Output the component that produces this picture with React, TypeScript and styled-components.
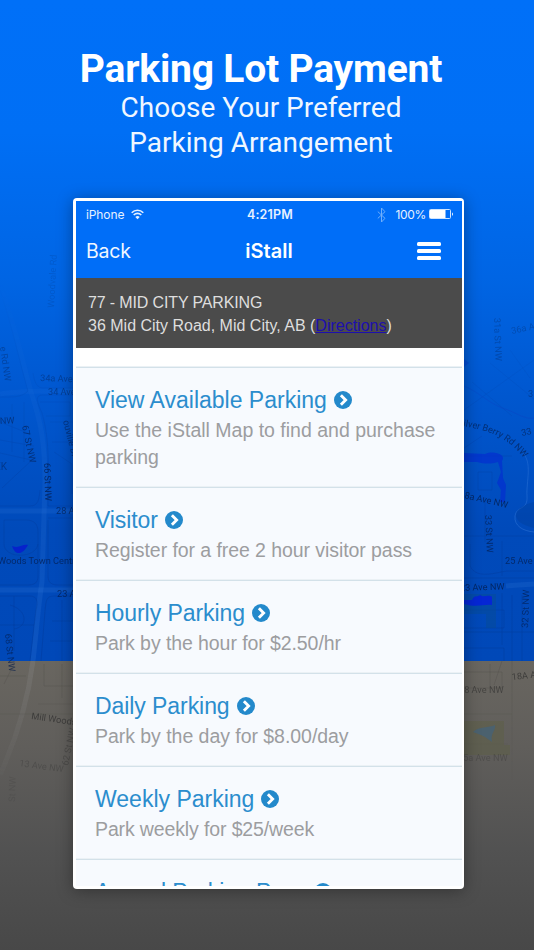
import React from "react";
import styled, { createGlobalStyle } from "styled-components";

const GlobalStyle = createGlobalStyle`
  * { box-sizing: border-box; }
  html, body { margin: 0; padding: 0; }
  body { width: 534px; height: 950px; overflow: hidden; }
`;

const helvetica = `"Liberation Sans", Arial, sans-serif`;

const Page = styled.main`
  position: relative;
  width: 534px;
  height: 950px;
  overflow: hidden;
  display: flex;
  flex-direction: column;
  align-items: center;
  background: #4a4a4a;
`;

const MapBackdrop = styled.svg`
  position: absolute;
  inset: 0;
  width: 534px;
  height: 950px;
`;

const Hero = styled.header`
  position: relative;
  width: 100%;
  height: 198px;
  padding-top: 48px;
  padding-right: 12px;
  text-align: center;
  color: #fff;
  font-family: Roboto, sans-serif;
`;

const HeroTitle = styled.h1`
  margin: 0;
  font-size: 39px;
  line-height: 43px;
  font-weight: 700;
  letter-spacing: -0.2px;
`;

const HeroLine = styled.p`
  margin: 0;
  font-size: 28px;
  line-height: 34.5px;
  font-weight: 400;
  color: #f0f7ff;
`;

const Phone = styled.section`
  position: relative;
  width: 391px;
  height: 691px;
  margin-left: 3px;
  padding: 3px;
  border-radius: 4px;
  background: #fff;
  box-shadow: 0 2px 16px rgba(0, 0, 0, 0.35);
`;

const Screen = styled.div`
  width: 386px;
  height: 685px;
  overflow: hidden;
  display: flex;
  flex-direction: column;
  font-family: ${helvetica};
`;

const StatusBar = styled.div`
  flex: none;
  height: 27px;
  padding: 0 8px 0 10px;
  display: grid;
  grid-template-columns: 1fr auto 1fr;
  align-items: center;
  background: #006ef8;
  color: #e6f1ff;
  font: 400 12px/27px Inter, sans-serif;
`;

const StatusGroup = styled.div<{ $end?: boolean }>`
  display: flex;
  align-items: center;
  justify-content: ${(p) => (p.$end ? "flex-end" : "flex-start")};
`;

const Carrier = styled.span`
  margin-right: 7px;
  letter-spacing: -0.1px;
`;

const Clock = styled.span`
  font-weight: 600;
  font-size: 12.5px;
  letter-spacing: 0.2px;
`;

const Charge = styled.span`
  margin: 0 3px 0 9px;
  letter-spacing: -0.3px;
`;

const NavBar = styled.nav`
  flex: none;
  height: 50px;
  padding: 0 21px 5px 10px;
  display: grid;
  grid-template-columns: 1fr auto 1fr;
  align-items: center;
  background: #006ef8;
  color: #fff;
  font-family: Inter, sans-serif;
`;

const BackLink = styled.span`
  font-size: 19.5px;
  letter-spacing: -0.2px;
  color: #f0f7ff;
`;

const NavTitle = styled.span`
  font-size: 20px;
  font-weight: 600;
  margin-left: 11px;
`;

const MenuButton = styled.div`
  justify-self: end;
  width: 24px;
  display: flex;
  flex-direction: column;
  gap: 3px;
`;

const MenuBar = styled.i`
  height: 4px;
  border-radius: 1.5px;
  background: #fff;
`;

const Location = styled.div`
  flex: none;
  height: 70px;
  padding: 12.5px 12px 0;
  background: #4b4b4b;
  color: #dedede;
  font-size: 16px;
  line-height: 23.5px;
  white-space: nowrap;
`;

const LocationLine = styled.div<{ $spacing: string }>`
  letter-spacing: ${(p) => p.$spacing};
`;

const Directions = styled.a`
  color: #1d0fae;
  text-decoration: underline;
`;

const List = styled.div`
  margin-top: 19px;
  display: flex;
  flex-direction: column;
`;

const Option = styled.article`
  flex: none;
  padding: 18px 19px 16px;
  border-top: 1px solid #d3e1e9;
  background: #f7fafe;
  box-shadow: 0 -1px 0 #ebf1f5;
`;

const OptionTitle = styled.div`
  height: 28px;
  display: flex;
  align-items: center;
  gap: 7px;
  color: #2b8dcd;
  font-size: 23px;
  line-height: 28px;
  white-space: nowrap;
`;

const OptionLabel = styled.span<{ $spacing: string }>`
  letter-spacing: ${(p) => p.$spacing};
`;

const OptionText = styled.div<{ $spacing: string }>`
  margin-top: 3px;
  color: #9c9da0;
  font-size: 19.5px;
  line-height: 27px;
  letter-spacing: ${(p) => p.$spacing};
  white-space: pre-line;
`;

const options = [
  { title: "View Available Parking", text: "Use the iStall Map to find and purchase\nparking", ts: "0px", ds: "0px" },
  { title: "Visitor", text: "Register for a free 2 hour visitor pass", ts: "-0.1px", ds: "-0.07px" },
  { title: "Hourly Parking", text: "Park by the hour for $2.50/hr", ts: "-0.06px", ds: "-0.08px" },
  { title: "Daily Parking", text: "Park by the day for $8.00/day", ts: "-0.07px", ds: "-0.04px" },
  { title: "Weekly Parking", text: "Park weekly for $25/week", ts: "0px", ds: "-0.13px" },
  { title: "Annual Parking Pass", text: "Park all year", ts: "-0.1px", ds: "0px" },
];

const ChevronCircle = () => (
  <svg width="18" height="18" viewBox="0 0 18 18">
    <circle cx="9" cy="9" r="9" fill="#2389cb" />
    <path d="M6.9 4.3 11.6 9l-4.7 4.7" fill="none" stroke="#fff" strokeWidth="2.9" />
  </svg>
);

const Wifi = () => (
  <svg width="13" height="11" viewBox="0 0 13 11" fill="none" stroke="#e6f1ff" strokeWidth="1.6">
    <path d="M.7 3.8C4 .4 9 .4 12.3 3.8M2.7 6c2.2-2.2 5.4-2.2 7.6 0" />
    <path d="M4.3 7.9c1.3-1.2 3.1-1.2 4.4 0L6.5 10.2z" fill="#e6f1ff" stroke="none" />
  </svg>
);

const Bluetooth = () => (
  <svg width="9" height="16" viewBox="0 0 9 16" fill="none" stroke="#6eaefb" strokeWidth="1">
    <path d="M.8 4.6 8 11.3 4.5 15V1L8 4.7.8 11.4" />
  </svg>
);

const Battery = () => (
  <svg width="25" height="11" viewBox="0 0 25 11">
    <rect x=".5" y=".5" width="21" height="9" rx="1" fill="none" stroke="#cfe4ff" />
    <rect x="1" y="1" width="15.5" height="8" fill="#fff" />
    <path d="M23 3.4c1.3.3 1.3 3 0 3.4z" fill="#e6f1ff" />
  </svg>
);

const mapLabels: { t: string; x: number; y: number; r: number; o: number; s?: number }[] = [
  { t: "Woodvale Rd", x: 54, y: 308, r: -87, o: 0.15 },
  { t: "34a Ave NW", x: 40, y: 381, r: 2, o: 0.4 },
  { t: "34 Ave NW", x: 48, y: 395, r: 0, o: 0.45 },
  { t: "e Rd NW", x: 0, y: 347, r: 82, o: 0.35 },
  { t: "NW", x: 0, y: 424, r: -3, o: 0.55 },
  { t: "67 St NW", x: 22, y: 426, r: 78, o: 0.6 },
  { t: "EK", x: -5, y: 470, r: 0, o: 0.45, s: 10 },
  { t: "66 St NW", x: 44, y: 463, r: 88, o: 0.75 },
  { t: "ouville Dr W", x: 63, y: 421, r: 76, o: 0.55 },
  { t: "28 Ave NW", x: 56, y: 514, r: 0, o: 0.65 },
  { t: "Woods Town Centre", x: -2, y: 564, r: 0, o: 0.7 },
  { t: "23 Ave NW", x: 57, y: 597, r: 0, o: 0.7 },
  { t: "68 St NW", x: 5, y: 634, r: 84, o: 0.65 },
  { t: "Mill Woods Rd", x: 31, y: 719, r: 8, o: 0.65 },
  { t: "62 St NW", x: 68, y: 766, r: -78, o: 0.35 },
  { t: "13 Ave NW", x: 19, y: 766, r: 8, o: 0.28 },
  { t: "St NW", x: 15, y: 802, r: -88, o: 0.15 },
  { t: "31a St NW", x: 494, y: 318, r: 88, o: 0.3 },
  { t: "36a Ave", x: 512, y: 334, r: -12, o: 0.28 },
  { t: "35 Ave", x: 528, y: 397, r: 0, o: 0.4 },
  { t: "33 Ave", x: 522, y: 436, r: -12, o: 0.6 },
  { t: "8a Ave NW", x: 464, y: 498, r: 13, o: 0.75 },
  { t: "33 St NW", x: 485, y: 515, r: 87, o: 0.65 },
  { t: "25 Ave NW", x: 505, y: 564, r: 0, o: 0.7 },
  { t: "23 Ave NW", x: 460, y: 591, r: -2, o: 0.75 },
  { t: "32 St NW", x: 528, y: 628, r: -88, o: 0.65 },
  { t: "18A Ave", x: 512, y: 680, r: -6, o: 0.65 },
  { t: "18 Ave NW", x: 459, y: 693, r: 0, o: 0.55 },
  { t: "15a Ave NW", x: 458, y: 761, r: 0, o: 0.28 },
];

const StreetMap = () => (
  <MapBackdrop viewBox="0 0 534 950">
    <defs>
      <linearGradient id="sky" x1="0" y1="0" x2="0" y2="661" gradientUnits="userSpaceOnUse">
        <stop offset="0" stopColor="#0070f8" />
        <stop offset=".2" stopColor="#006ff5" />
        <stop offset=".42" stopColor="#0065e4" />
        <stop offset=".6" stopColor="#0057cf" />
        <stop offset=".8" stopColor="#004aba" />
        <stop offset="1" stopColor="#0048b8" />
      </linearGradient>
      <linearGradient id="ground" x1="0" y1="661" x2="0" y2="950" gradientUnits="userSpaceOnUse">
        <stop offset="0" stopColor="#696660" />
        <stop offset=".3" stopColor="#605e5b" />
        <stop offset=".65" stopColor="#525252" />
        <stop offset="1" stopColor="#484848" />
      </linearGradient>
      <linearGradient id="roadFade" x1="0" y1="280" x2="0" y2="800" gradientUnits="userSpaceOnUse">
        <stop offset="0" stopColor="#fff" stopOpacity="0" />
        <stop offset=".4" stopColor="#fff" stopOpacity=".7" />
        <stop offset=".72" stopColor="#fff" stopOpacity="1" />
        <stop offset="1" stopColor="#fff" stopOpacity="0" />
      </linearGradient>
      <mask id="fade" maskUnits="userSpaceOnUse" x="0" y="0" width="534" height="950">
        <rect width="534" height="950" fill="url(#roadFade)" />
      </mask>
      <path id="silverBerry" d="M463 426C490 431 510 436 531 468" />
    </defs>
    <rect width="534" height="661" fill="url(#sky)" />
    <rect y="661" width="534" height="289" fill="url(#ground)" />
    <g mask="url(#fade)" fill="none">
      <g stroke="#4a90ea" strokeOpacity=".17" strokeWidth="5">
        <path d="M0 285C14 322 22 360 31 392c10 30 14 52 14 90l-3 100C39 600 38 615 33 661" />
        <path d="M0 394c22-4 48-3 80-3M0 511h80M0 590h80M506 586l28-2" />
        <path d="M33 661C28 700 18 735 0 775" stroke="#8a8a8a" strokeOpacity=".3" />
      </g>
      <g stroke="#003083" strokeOpacity=".25" strokeWidth="1">
        <path d="M0 290C12 325 19 360 28 391c-7 7-16 6-28 6M80 388H42c-7-1-8-10-9-15M80 395H42c-8 1-4 9 0 18 8 29 6 50 6 93h32" />
        <path d="M0 422l30 12M0 440l34 6M0 453l36 8M12 404v48M24 402v60M2 488l30-28M0 506h30c8 0 9-6 10-16M4 520h22c8 0 12 4 12 12v44c0 7-4 9-10 9H0M4 520v24c0 15 32 15 34 0" />
        <path d="M48 518h32M48 520v56c0 7 4 9 10 9h22M0 596h30c8 0 8 7 6 14l-6 51M80 596H54c-8 0-8 5-9 15l-4 50" />
        <path d="M40 402h30v14H46M50 422h25v20H52M54 452l18 12v30M0 625h34M14 596v55M52 621h28M50 641h30M62 600v61M10 605c18 5 18 22 4 24" />
        <path d="M464 386c17 7 24 18 44 24 8 3 18 10 26 8" stroke="#1432bc" strokeOpacity=".5" />
        <path d="M464 410l70-50M472 382l40 34M490 363l44 36M510 350l20 28M464 456h48M464 448l18-12M478 472h14v18h-14zM485 497v45M464 536h70M470 544v22c7 15 30 5 38 5h26M502 541v35M464 578h70M502 593v52M464 610h40v18h-40M512 595v66M522 595v66M464 632h70M464 648h40v13" />
        <path d="M522 452c11 10 4 30 5 44 1 15-10 9-12 20-1 10 8 15 19 16" stroke="#5b9df0" strokeOpacity=".35" />
      </g>
      <g stroke="#4c4a47" strokeOpacity=".35" strokeWidth="1">
        <path d="M0 676h26M0 714h80M38 704h42M44 664v22h34M62 664v34M14 664l-10 20M464 672h38v16h-38M502 661l-8 24M512 661v119M464 714h48M464 744h44M490 664v22" />
      </g>
      <path d="M534 502c-22 5-26 20 0 26z" fill="#003b94" fillOpacity=".45" />
      <path d="M464 594h32v34h-10v-14h-22z" fill="#064b94" fillOpacity=".5" />
    </g>
    <path d="M464 453l21 1c9-4 22 1 17 7l1 17 3 7-1 17h-5l1-12-4-7 4-11-3-10c-8 2-12 2-21 0h-13z" fill="#0330cf" fillOpacity=".75" />
    <path d="M464 359l5 4-5 4z" fill="#0330cf" fillOpacity=".35" />
    <path d="M12 546c7 3 10-2 16-1-5 9-12 12-16 1z" fill="#0622cc" />
    <path d="M464 600h8c3-6 5-2 8-5 4 3 8-1 12 2v8c-9-1-15 3-28-1z" fill="#0526d4" />
    <path d="M464 721h40v24h6v10h-46z" fill="#5d5f43" fillOpacity=".45" />
    <path d="M473 732c6-6 16-4 22-7 1 6-5 8-3 17l-7-5-4-2z" fill="#486273" fillOpacity=".85" />
    <g fontFamily="Roboto, sans-serif" fill="#041b49">
      {mapLabels.map((l, i) => (
        <text
          key={i}
          fontSize={l.s ?? 9.2}
          fontWeight="400"
          opacity={l.o}
          fill={l.y > 661 ? "#292929" : undefined}
          transform={`translate(${l.x} ${l.y}) rotate(${l.r})`}
        >
          {l.t}
        </text>
      ))}
      <text fontSize="9.2" opacity=".65">
        <textPath href="#silverBerry">ilver Berry Rd NW</textPath>
      </text>
    </g>
  </MapBackdrop>
);

export default function App() {
  return (
    <>
      <GlobalStyle />
      <Page>
        <StreetMap />
        <Hero>
          <HeroTitle>Parking Lot Payment</HeroTitle>
          <HeroLine>Choose Your Preferred</HeroLine>
          <HeroLine>Parking Arrangement</HeroLine>
        </Hero>
        <Phone>
          <Screen>
            <StatusBar>
              <StatusGroup>
                <Carrier>iPhone</Carrier>
                <Wifi />
              </StatusGroup>
              <Clock>4:21PM</Clock>
              <StatusGroup $end>
                <Bluetooth />
                <Charge>100%</Charge>
                <Battery />
              </StatusGroup>
            </StatusBar>
            <NavBar>
              <BackLink>Back</BackLink>
              <NavTitle>iStall</NavTitle>
              <MenuButton>
                <MenuBar />
                <MenuBar />
                <MenuBar />
              </MenuButton>
            </NavBar>
            <Location>
              <LocationLine $spacing="-0.14px">77 - MID CITY PARKING</LocationLine>
              <LocationLine $spacing="0px">
                36 Mid City Road, Mid City, AB (<Directions>Directions</Directions>)
              </LocationLine>
            </Location>
            <List>
              {options.map((o) => (
                <Option key={o.title}>
                  <OptionTitle>
                    <OptionLabel $spacing={o.ts}>{o.title}</OptionLabel>
                    <ChevronCircle />
                  </OptionTitle>
                  <OptionText $spacing={o.ds}>{o.text}</OptionText>
                </Option>
              ))}
            </List>
          </Screen>
        </Phone>
      </Page>
    </>
  );
}
